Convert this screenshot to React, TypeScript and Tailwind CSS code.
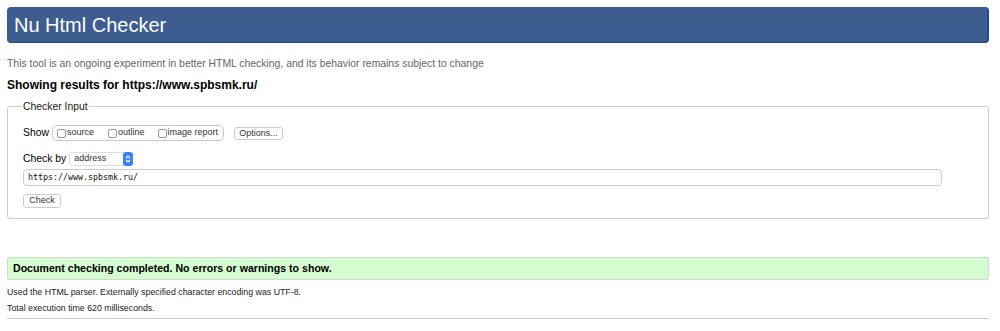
export default function App() {
  return (
    <div className="w-[1000px] h-[331px] bg-white pl-[7px] pr-[11px] pt-[7px] font-['Liberation_Sans',Arial,sans-serif] text-black overflow-hidden">
      {/* Title bar */}
      <div className="h-[36px] rounded-[4px] bg-[#3d5d91] border-r-2 border-b border-[#214c8c] flex items-center pl-[7px]">
        <h1 className="text-[20px] text-white leading-none">Nu Html Checker</h1>
      </div>

      <p className="mt-[14px] text-[10.4px] text-[#666] leading-[14px]">
        This tool is an ongoing experiment in better HTML checking, and its behavior remains subject to change
      </p>
      <h2 className="mt-[6px] text-[12px] font-bold leading-[16px]">Showing results for https://www.spbsmk.ru/</h2>

      {/* Checker input */}
      <fieldset className="mt-[6px] border border-[#ccc] rounded-[3px] pl-[15px] pr-[46px] pt-[10px] pb-[11px] h-[120px]">
        <legend className="text-[10.4px] text-[#222] px-[1px] ml-[-1px]">Checker Input</legend>

        <div className="flex items-center h-[17px]">
          <span className="text-[10.4px] mr-[3px]">Show</span>
          <div className="flex items-center h-[16px] w-[172px] border border-[#c8c8c8] rounded-[5px] pl-[4px] text-[9px] text-[#333]">
            <span className="w-[9px] h-[9px] border border-[#999] rounded-[2px] bg-white" />
            <span className="ml-[1px]">source</span>
            <span className="w-[9px] h-[9px] border border-[#999] rounded-[2px] bg-white ml-[14px]" />
            <span className="ml-[1px]">outline</span>
            <span className="w-[9px] h-[9px] border border-[#999] rounded-[2px] bg-white ml-[13px]" />
            <span className="ml-[1px]">image report</span>
          </div>
          <button className="ml-[10px] h-[13px] w-[49px] border border-[#ccc] rounded-[3px] bg-white text-[9px] text-[#333] leading-none">
            Options...
          </button>
        </div>

        <div className="flex items-center mt-[10px] h-[14px]">
          <span className="text-[10.4px] mr-[3px]">Check by</span>
          <div className="flex items-center h-[14px] w-[64px] border border-[#ddd] rounded-[3px] bg-white">
            <span className="flex-1 text-[9px] text-[#333] pl-[4px] leading-none">address</span>
            <span className="w-[10px] h-[14px] -mr-[1px] rounded-[3px] bg-[#3b82f6] flex items-center justify-center">
              <svg width="6" height="10" viewBox="0 0 6 10" fill="none" stroke="white" strokeWidth="1.2">
                <path d="M1 4 L3 2 L5 4" />
                <path d="M1 6 L3 8 L5 6" />
              </svg>
            </span>
          </div>
        </div>

        <div className="mt-[3px] h-[17px] w-[919px] border border-[#ccc] rounded-[4px] flex items-center pl-[4px]">
          <span className="font-['DejaVu_Sans_Mono',monospace] text-[8.3px] text-[#111]">https://www.spbsmk.ru/</span>
        </div>

        <button className="mt-[8px] h-[14px] w-[38px] border border-[#ccc] rounded-[3px] bg-white text-[9px] text-[#333] leading-none block">
          Check
        </button>
      </fieldset>

      {/* Result */}
      <div className="mt-[38px] h-[23px] bg-[#d5fcd0] border border-[#cbdcc8] rounded-[2px] flex items-center pl-[5px]">
        <span className="text-[10.6px] font-bold">Document checking completed. No errors or warnings to show.</span>
      </div>
      <p className="mt-[5px] text-[8.8px] text-[#222] leading-[14px]">
        Used the HTML parser. Externally specified character encoding was UTF-8.
      </p>
      <p className="mt-[2px] text-[8.8px] text-[#222] leading-[14px]">Total execution time 620 milliseconds.</p>
      <hr className="mt-[3px] border-t border-[#ccc]" />
    </div>
  );
}
